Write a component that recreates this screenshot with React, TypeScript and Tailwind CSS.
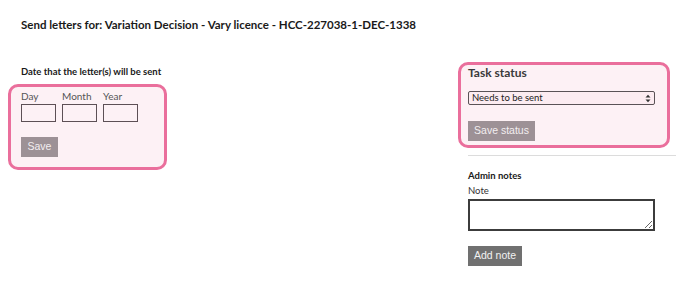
import React from 'react';

const App = () => {
  return (
    <div className="w-[692px] h-[300px] bg-white text-[#1a1a1a] font-['Lato',sans-serif]">
      <h1 className="pl-[21px] pt-[17px] text-[11.5px] font-bold leading-[16px] text-[#1a1a1a]">
        Send letters for: Variation Decision - Vary licence - HCC-227038-1-DEC-1338
      </h1>

      <div className="flex mt-[29px]">
        {/* left column */}
        <div className="w-[458px] pl-[8px]">
          <div className="pl-[13px] text-[9.5px] font-bold leading-[14px] mt-[3px]">
            Date that the letter(s) will be sent
          </div>
          <div className="mt-[5px] w-[159px] h-[86px] rounded-[10px] border-[3px] border-[#ea6f9c] bg-[#fdf1f5] pl-[10px] pt-[3px]">
            <div className="flex gap-[6px]">
              {['Day', 'Month', 'Year'].map((l) => (
                <div key={l} className="flex flex-col">
                  <span className="text-[10px] leading-[13px] text-[#555]">{l}</span>
                  <input className="mt-[1px] w-[35px] h-[18px] border-[1.5px] border-[#5d4f55] bg-[#fdf1f5]" />
                </div>
              ))}
            </div>
            <button className="mt-[15px] w-[37px] h-[20px] bg-[#9d9196] text-[#f3eef0] text-[10.5px] font-['Liberation_Sans',Arial,sans-serif]">
              Save
            </button>
          </div>
        </div>

        {/* right column */}
        <div className="w-[230px]">
          <div className="w-[212px] h-[86px] rounded-[10px] border-[3px] border-[#ea6f9c] bg-[#fdf1f5] pl-[7px] pr-[12px] pt-[1px]">
            <div className="text-[12px] font-bold leading-[14px] text-[#3a3a3a]">Task status</div>
            <div className="mt-[11px] h-[14px] w-[187px] rounded-[2px] border border-[#5a5256] bg-[#fcecf1] flex items-center justify-between px-[3px]">
              <span className="text-[9.5px] leading-[12px] text-[#222]">Needs to be sent</span>
              <svg width="6" height="9" viewBox="0 0 6 9">
                <path d="M0.5 3.5 L3 0.8 L5.5 3.5 Z" fill="#333" />
                <path d="M0.5 5.5 L3 8.2 L5.5 5.5 Z" fill="#333" />
              </svg>
            </div>
            <button className="mt-[16px] w-[67px] h-[20px] bg-[#9d9196] text-[#f3eef0] text-[10.5px] font-['Liberation_Sans',Arial,sans-serif]">
              Save status
            </button>
          </div>
          <div className="ml-[10px] mt-[7px] w-[208px] h-px bg-[#dcdcdc]" />
          <div className="ml-[10px] mt-[13px]">
            <div className="text-[9.5px] font-bold leading-[14px]">Admin notes</div>
            <div className="mt-[1px] text-[9.5px] leading-[14px] text-[#333]">Note</div>
            <textarea className="mt-px block w-[187px] h-[32px] border-2 border-[#3c3c3c] bg-white resize-y" />
            <button className="mt-[15px] w-[54px] h-[20px] bg-[#707070] text-[#f2f2f2] text-[10.5px] font-['Liberation_Sans',Arial,sans-serif]">
              Add note
            </button>
          </div>
        </div>
      </div>
    </div>
  );
};

export default App;
